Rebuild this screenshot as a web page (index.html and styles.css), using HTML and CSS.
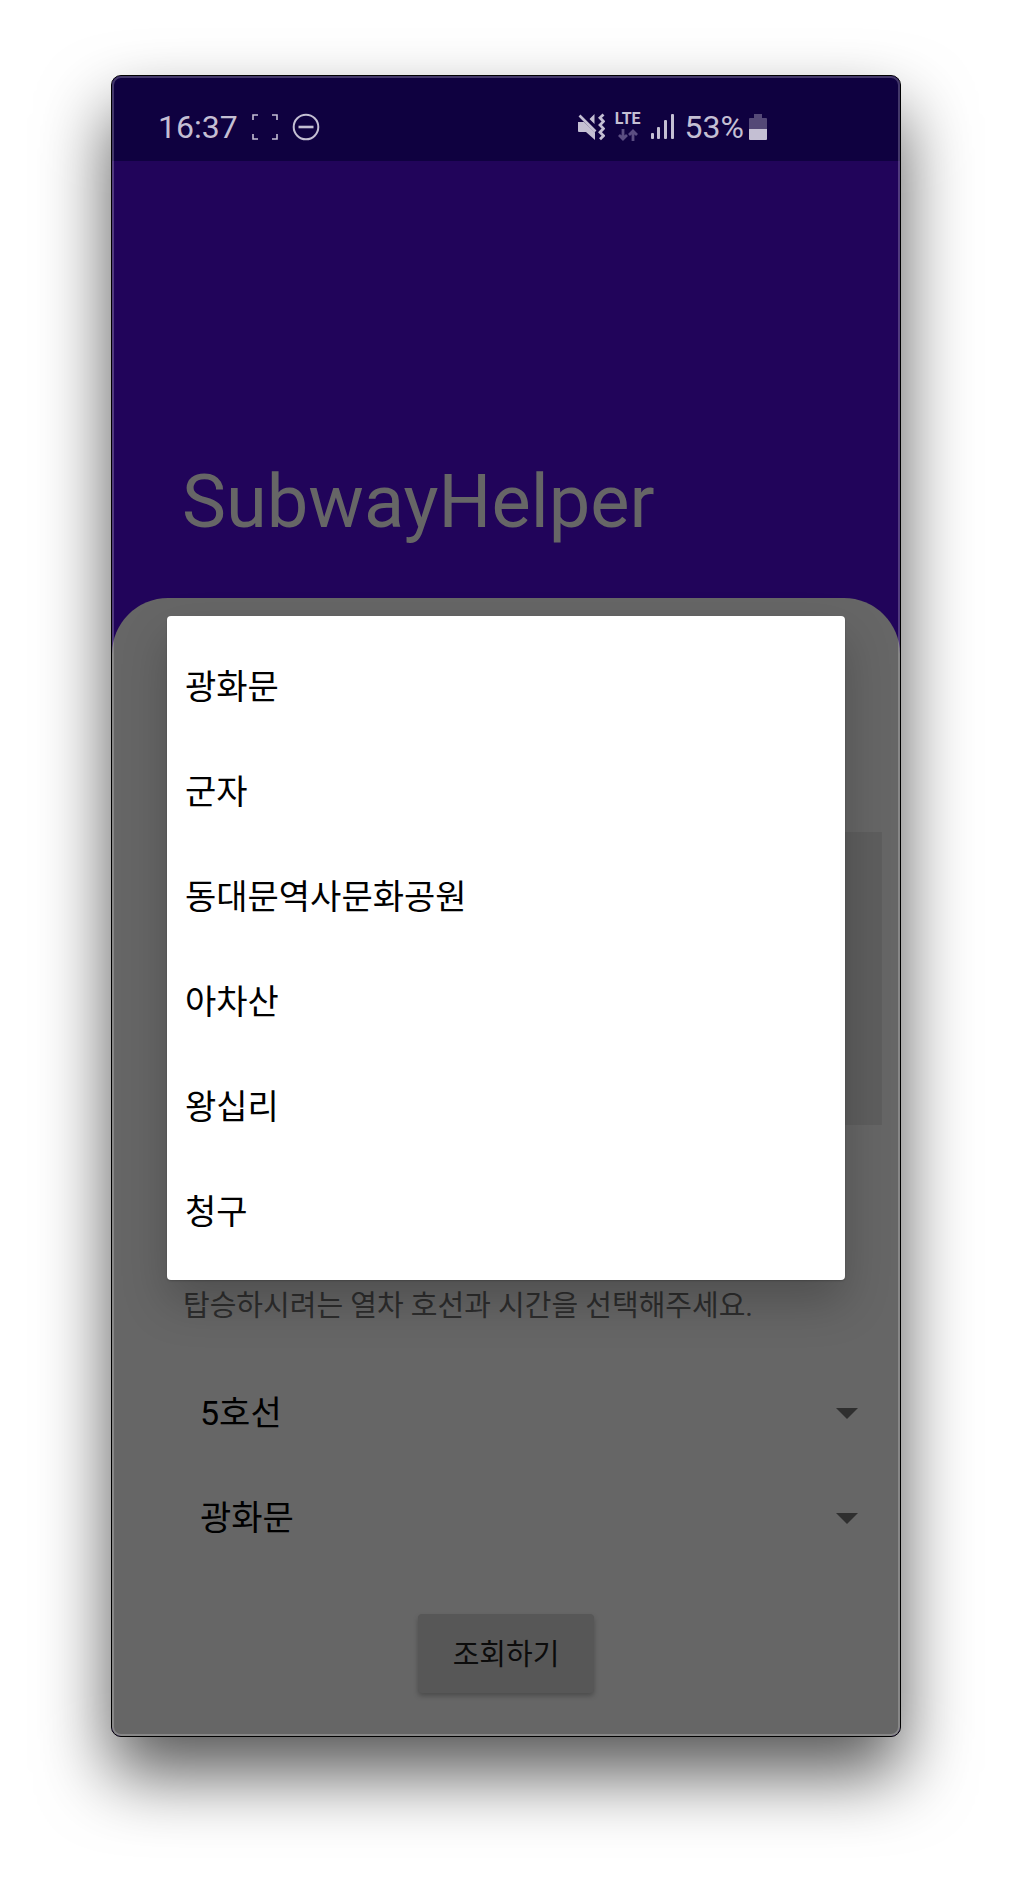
FILE: index.html
```html
<!DOCTYPE html>
<html lang="ko">
<head>
<meta charset="utf-8">
<meta name="viewport" content="width=device-width, initial-scale=1">
<title>SubwayHelper</title>
<link rel="stylesheet" href="styles.css">
</head>
<body>
<div class="phone">
  <div class="status">
    <div class="status-left">
      <span class="status-text">16:37</span>
      <svg width="26" height="26" viewBox="0 0 26 26" fill="none" stroke="currentColor" stroke-width="1.600"><path d="M1 6V1h5M20 1h5v5M25 20v5h-5M6 25H1v-5"/></svg>
      <svg width="28" height="28" viewBox="0 0 28 28" fill="none" stroke="currentColor" stroke-width="2"><circle cx="14" cy="14" r="12.3"/><path d="M6.500 14h15" stroke-width="2.600"/></svg>
    </div>
    <div class="status-right">
      <svg width="28" height="28" viewBox="0 0 28 28"><path fill="currentColor" d="M1 9h6l11 10.500V27l-9-8H2a1 1 0 0 1-1-1zM17.500 1v10L12.500 6z"/><path fill="none" stroke="currentColor" stroke-width="2.600" d="M2.500 2.500l16 16"/><path fill="none" stroke="currentColor" stroke-width="2.800" d="M26.500 1.500l-3.500 3.300 3.500 3.600-3.500 3.600 3.500 3.600-3.500 3.600 3.500 3.600-3.500 3.400"/></svg>
      <div class="network">
        <span class="network-label">LTE</span>
        <svg width="20" height="12" viewBox="0 0 20 12" fill="none" stroke="currentColor" stroke-width="2.800"><path d="M5 0v10M1 6l4 4 4-4M15 12V2M11 6l4-4 4 4"/></svg>
      </div>
      <svg width="24" height="26" viewBox="0 0 24 26" fill="currentColor"><rect x="0" y="19" width="3" height="6" rx="1"/><rect x="6" y="13" width="3" height="12" rx="1"/><rect x="13" y="6" width="3" height="19" rx="1"/><rect x="20" y="0" width="3" height="25" rx="1"/></svg>
      <div class="battery">
        <span class="status-text">53%</span>
        <svg width="18" height="26" viewBox="0 0 18 26" fill="currentColor"><path opacity=".38" d="M5 0h8v4h4a1 1 0 0 1 1 1v10H0V5a1 1 0 0 1 1-1h4z"/><path d="M0 15h18v10a1 1 0 0 1-1 1H1a1 1 0 0 1-1-1z"/></svg>
      </div>
    </div>
  </div>

  <header class="header">
    <h1 class="title">SubwayHelper</h1>
  </header>

  <main class="sheet">
    <div class="result"></div>
    <form class="form">
      <p class="prompt">탑승하시려는 열차 호선과 시간을 선택해주세요.</p>
      <div class="spinner">
        <select class="spinner-select" aria-label="호선"><option>5호선</option></select>
        <svg class="spinner-arrow" width="22" height="11" viewBox="0 0 22 11"><path d="M0 0h22L11 11z" fill="currentColor"/></svg>
      </div>
      <div class="spinner">
        <select class="spinner-select" aria-label="역"><option>광화문</option><option>군자</option><option>동대문역사문화공원</option><option>아차산</option><option>왕십리</option><option>청구</option></select>
        <svg class="spinner-arrow" width="22" height="11" viewBox="0 0 22 11"><path d="M0 0h22L11 11z" fill="currentColor"/></svg>
      </div>
      <button class="submit" type="button">조회하기</button>
    </form>

    <ul class="popup" aria-label="역">
      <li><button class="popup-item" type="button">광화문</button></li>
      <li><button class="popup-item" type="button">군자</button></li>
      <li><button class="popup-item" type="button">동대문역사문화공원</button></li>
      <li><button class="popup-item" type="button">아차산</button></li>
      <li><button class="popup-item" type="button">왕십리</button></li>
      <li><button class="popup-item" type="button">청구</button></li>
    </ul>
  </main>
</div>
</body>
</html>
```
FILE: styles.css
```css
* {
  box-sizing: border-box;
}

body {
  margin: 0;
  padding: 75px 111px 147px;
  background: #fff;
  font-family: Roboto, "Noto Sans CJK KR", sans-serif;
}

button,
select {
  font-family: inherit;
}

.phone {
  position: relative;
  border: 1px solid #000;
  border-radius: 10px;
  background: #21045a;
  box-shadow: 0 37px 70px rgba(0, 0, 0, 0.66);
}

/* light rim just inside the window edge */
.phone::after {
  content: "";
  position: absolute;
  inset: 0;
  border: 2px solid rgba(255, 255, 255, 0.22);
  border-radius: 9px;
  pointer-events: none;
}

.status {
  display: flex;
  justify-content: space-between;
  align-items: center;
  height: 85px;
  padding: 16px 133px 0 46px;
  border-radius: 9px 9px 0 0;
  background: #0f0140;
  color: #c4bfd3;
}

.status-left,
.status-right {
  display: flex;
  align-items: center;
}

.status-left {
  gap: 14px;
}

.status-right {
  gap: 10px;
}

.status-text {
  font-size: 32px;
  line-height: 38px;
}

.network {
  display: flex;
  flex-direction: column;
  align-items: center;
  gap: 4px;
}

.network svg {
  color: #5b4e82;
}

.network-label {
  font-size: 16px;
  line-height: 12px;
  font-weight: 700;
}

.battery {
  display: flex;
  align-items: center;
  gap: 5px;
}

.header {
  display: flex;
  align-items: flex-end;
  height: 437px;
  padding: 0 70px 52px;
}

.title {
  margin: 0;
  color: #666;
  font-size: 74px;
  line-height: 88px;
  font-weight: 400;
}

.sheet {
  position: relative;
  padding: 234px 18px 43px;
  border-radius: 56px 56px 9px 9px;
  background: #666;
}

.result {
  height: 293px;
  margin-left: 53px;
  background: #5e5e5e;
}

.form {
  display: flex;
  flex-direction: column;
  margin-top: 161px;
  padding-left: 53px;
}

.prompt {
  margin: 0 0 35px;
  color: #2d2d2d;
  font-size: 29px;
  line-height: 40px;
}

.spinner {
  display: grid;
  align-items: center;
}

.spinner-select {
  grid-area: 1 / 1;
  height: 105px;
  margin: 0;
  padding: 0 60px 2px 17px;
  border: 0;
  appearance: none;
  background: transparent;
  color: #000;
  font-size: 34px;
}

.spinner-arrow {
  grid-area: 1 / 1;
  justify-self: end;
  margin-right: 24px;
  color: #2f2f2f;
  pointer-events: none;
}

.submit {
  align-self: center;
  width: 176px;
  height: 79px;
  margin: 43px 53px 0 0;
  padding: 0 0 4px;
  border: 0;
  border-radius: 4px;
  background: #575757;
  box-shadow: 0 3px 5px rgba(0, 0, 0, 0.25);
  color: #0c0c0c;
  font-size: 29px;
}

.popup {
  position: absolute;
  top: 18px;
  left: 55px;
  right: 55px;
  margin: 0;
  padding: 17px 0;
  border-radius: 4px;
  background: #fff;
  box-shadow: 0 22px 46px rgba(0, 0, 0, 0.22), 0 1px 2px rgba(0, 0, 0, 0.2);
  list-style: none;
}

.popup-item {
  display: block;
  width: 100%;
  height: 105px;
  padding: 0 18px 2px;
  border: 0;
  background: transparent;
  color: #000;
  font-size: 34px;
  text-align: left;
}
```
